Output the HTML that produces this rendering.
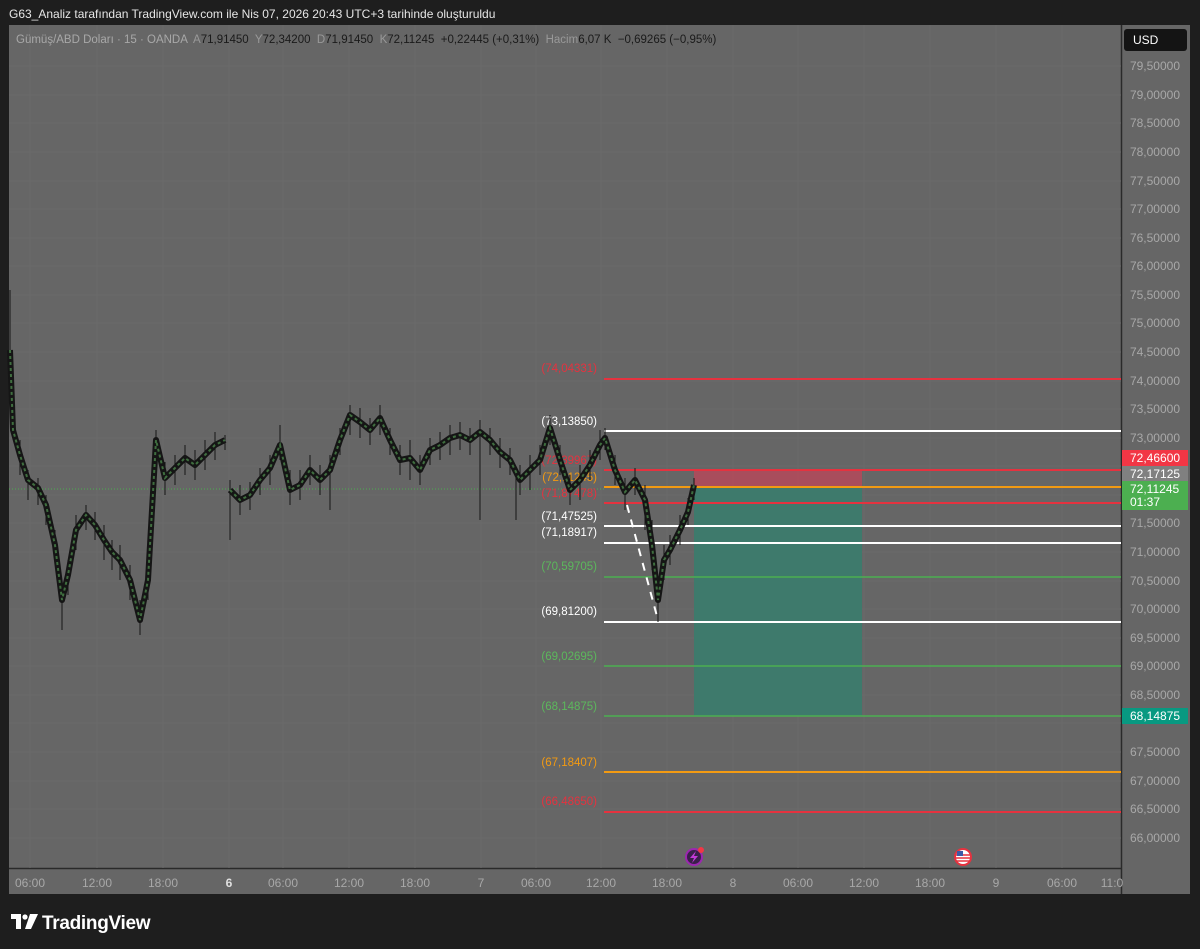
<!DOCTYPE html><html><head><meta charset="utf-8"><style>
body{margin:0;background:#1e1e1e;width:1200px;height:949px;overflow:hidden;font-family:"Liberation Sans",sans-serif}
svg{position:absolute;left:0;top:0}
</style></head><body>
<svg width="1200" height="949" viewBox="0 0 1200 949" font-family="Liberation Sans, sans-serif">
<rect width="1200" height="949" fill="#1e1e1e"/>
<text x="9" y="18" fill="#e6e6e6" font-size="12">G63_Analiz tarafından TradingView.com ile Nis 07, 2026 20:43 UTC+3 tarihinde oluşturuldu</text>
<rect x="9" y="25" width="1181" height="869" fill="#666666"/>
<line x1="1121.5" y1="25" x2="1121.5" y2="894" stroke="#2a2a2a" stroke-width="1.5"/>
<line x1="9" y1="868.5" x2="1121" y2="868.5" stroke="#2a2a2a" stroke-width="1.5"/>
<g stroke="#6a6a6a" stroke-width="1">
<path d="M30 25V868M97 25V868M163 25V868M229 25V868M283 25V868M349 25V868M415 25V868M481 25V868M536 25V868M601 25V868M667 25V868M733 25V868M798 25V868M864 25V868M930 25V868M996 25V868M1062 25V868"/>
<path d="M9 66H1121M9 95H1121M9 123H1121M9 152H1121M9 181H1121M9 209H1121M9 238H1121M9 266H1121M9 295H1121M9 323H1121M9 352H1121M9 381H1121M9 409H1121M9 438H1121M9 466H1121M9 495H1121M9 523H1121M9 552H1121M9 581H1121M9 609H1121M9 638H1121M9 666H1121M9 695H1121M9 723H1121M9 752H1121M9 781H1121M9 809H1121M9 838H1121"/>
</g>
<rect x="1124" y="29" width="63" height="22" rx="3" fill="#141414"/>
<text x="1133" y="44" fill="#fff" font-size="12">USD</text>
<text x="16" y="43" font-size="11.5" fill="#a8a8a8" xml:space="preserve">Gümüş/ABD Doları · 15 · OANDA  <tspan fill="#999">A</tspan><tspan fill="#1a1a1a">71,91450</tspan>  <tspan fill="#999">Y</tspan><tspan fill="#1a1a1a">72,34200</tspan>  <tspan fill="#999">D</tspan><tspan fill="#1a1a1a">71,91450</tspan>  <tspan fill="#999">K</tspan><tspan fill="#1a1a1a">72,11245  +0,22445 (+0,31%)</tspan>  <tspan fill="#999">Hacim</tspan><tspan fill="#1a1a1a">6,07 K  −0,69265 (−0,95%)</tspan></text>
<g fill="#a8a8a8" font-size="12" text-anchor="end">
<text x="1180" y="70">79,50000</text><text x="1180" y="99">79,00000</text><text x="1180" y="127">78,50000</text><text x="1180" y="156">78,00000</text><text x="1180" y="185">77,50000</text><text x="1180" y="213">77,00000</text><text x="1180" y="242">76,50000</text><text x="1180" y="270">76,00000</text><text x="1180" y="299">75,50000</text><text x="1180" y="327">75,00000</text><text x="1180" y="356">74,50000</text><text x="1180" y="385">74,00000</text><text x="1180" y="413">73,50000</text><text x="1180" y="442">73,00000</text><text x="1180" y="527">71,50000</text><text x="1180" y="556">71,00000</text><text x="1180" y="585">70,50000</text><text x="1180" y="613">70,00000</text><text x="1180" y="642">69,50000</text><text x="1180" y="670">69,00000</text><text x="1180" y="699">68,50000</text><text x="1180" y="756">67,50000</text><text x="1180" y="785">67,00000</text><text x="1180" y="813">66,50000</text><text x="1180" y="842">66,00000</text>
</g>
<rect x="694" y="470" width="168" height="17" fill="#b5495a" opacity="0.85"/>
<rect x="694" y="487" width="168" height="229" fill="#3e7a6c"/>
<g stroke-width="2">
<line x1="604" y1="379" x2="1121" y2="379" stroke="#e5323f"/>
<line x1="604" y1="431" x2="1121" y2="431" stroke="#ffffff"/>
<line x1="604" y1="470" x2="1121" y2="470" stroke="#e5323f"/>
<line x1="604" y1="487" x2="1121" y2="487" stroke="#f29a12"/>
<line x1="604" y1="503" x2="1121" y2="503" stroke="#e5323f"/>
<line x1="604" y1="526" x2="1121" y2="526" stroke="#ffffff"/>
<line x1="604" y1="543" x2="1121" y2="543" stroke="#ffffff"/>
<line x1="604" y1="577" x2="1121" y2="577" stroke="#4caf50" stroke-width="1.5"/>
<line x1="604" y1="622" x2="1121" y2="622" stroke="#ffffff"/>
<line x1="604" y1="666" x2="1121" y2="666" stroke="#4caf50" stroke-width="1.5"/>
<line x1="604" y1="716" x2="1121" y2="716" stroke="#4caf50" stroke-width="1.5"/>
<line x1="604" y1="772" x2="1121" y2="772" stroke="#f29a12"/>
<line x1="604" y1="812" x2="1121" y2="812" stroke="#e5323f"/>
</g>
<line x1="9" y1="489" x2="604" y2="489" stroke="#4caf50" stroke-width="1" stroke-dasharray="1,2"/>
<g font-size="11.5" text-anchor="end">
<text x="597" y="372" fill="#e5323f">(74,04331)</text>
<text x="597" y="425" fill="#fff">(73,13850)</text>
<text x="597" y="464" fill="#e5323f">(72,39967)</text>
<text x="597" y="481" fill="#f29a12">(72,11245)</text>
<text x="597" y="497" fill="#e5323f">(71,87478)</text>
<text x="597" y="520" fill="#fff">(71,47525)</text>
<text x="597" y="536" fill="#fff">(71,18917)</text>
<text x="597" y="570" fill="#5cb85c">(70,59705)</text>
<text x="597" y="615" fill="#fff">(69,81200)</text>
<text x="597" y="660" fill="#5cb85c">(69,02695)</text>
<text x="597" y="710" fill="#5cb85c">(68,14875)</text>
<text x="597" y="766" fill="#f29a12">(67,18407)</text>
<text x="597" y="805" fill="#e5323f">(66,48650)</text>
</g>
<!-- wicks -->
<path stroke="#151515" stroke-width="1" d="M10 290V360M20 440V475M28 470V500M38 478V505M46 495V525M55 530V565M62 585V630M68 560V595M76 515V550M86 505V530M95 512V540M104 525V560M112 540V570M120 545V580M130 565V600M140 600V635M148 560V600M156 430V470M165 462V495M175 455V485M185 445V475M195 450V480M205 440V470M215 432V460M225 435V450M230 480V540M240 485V515M250 482V510M260 468V495M270 455V485M280 425V460M290 470V505M300 470V500M310 455V485M320 465V495M330 455V510M340 428V455M350 405V435M360 408V438M370 418V445M380 405V435M390 428V455M400 445V475M410 440V480M420 455V485M430 438V465M440 432V460M450 425V455M460 422V450M470 428V455M480 420V520M490 428V455M500 438V468M510 448V475M516 470V520M520 465V495M530 455V490M540 445V475M550 415V445M560 445V475M570 475V505M580 465V500M590 450V480M600 430V460M605 428V450M615 455V485M625 478V510M635 468V495M645 485V530M652 520V570M658 580V622M664 545V580M670 535V565M680 515V545M688 498V525M694 478V500"/>
<polyline fill="none" stroke="#151515" stroke-width="6" stroke-linejoin="round" points="10,350 13,430 20,455 28,480 38,488 46,505 55,545 62,600 68,575 76,530 86,515 95,525 104,540 112,552 120,560 130,580 140,620 148,580 156,440 165,478 175,468 185,458 195,465 205,455 215,445 225,440"/>
<polyline fill="none" stroke="#151515" stroke-width="6" stroke-linejoin="round" points="230,490 240,500 250,495 260,480 270,468 280,445 290,490 300,485 310,470 320,480 330,470 340,440 350,415 360,422 370,430 380,418 390,440 400,460 410,458 420,470 430,450 440,445 450,438 460,435 470,440 480,432 490,440 500,452 510,460 520,480 530,470 540,460 550,428 560,460 570,490 580,480 590,465 600,445 605,438 615,470 625,492 635,480 645,500 652,545 658,600 664,560 670,550 680,530 688,512 694,485"/>
<polyline fill="none" stroke="#3f6e3f" stroke-width="2" stroke-dasharray="3,3" points="10,350 13,430 20,455 28,480 38,488 46,505 55,545 62,600 68,575 76,530 86,515 95,525 104,540 112,552 120,560 130,580 140,620 148,580 156,440 165,478 175,468 185,458 195,465 205,455 215,445 225,440"/>
<polyline fill="none" stroke="#3f6e3f" stroke-width="2" stroke-dasharray="3,3" points="230,490 240,500 250,495 260,480 270,468 280,445 290,490 300,485 310,470 320,480 330,470 340,440 350,415 360,422 370,430 380,418 390,440 400,460 410,458 420,470 430,450 440,445 450,438 460,435 470,440 480,432 490,440 500,452 510,460 520,480 530,470 540,460 550,428 560,460 570,490 580,480 590,465 600,445 605,438 615,470 625,492 635,480 645,500 652,545 658,600 664,560 670,550 680,530 688,512 694,485"/>
<line x1="627" y1="505" x2="658" y2="620" stroke="#fff" stroke-width="2" stroke-dasharray="8,7"/>
<rect x="1122" y="450" width="66" height="16" fill="#f23645"/><text x="1130" y="462" fill="#fff" font-size="12">72,46600</text>
<rect x="1122" y="466" width="66" height="15" fill="#808080"/><text x="1130" y="478" fill="#fff" font-size="12">72,17125</text>
<rect x="1122" y="481" width="66" height="29" fill="#4caf50"/><text x="1130" y="493" fill="#fff" font-size="12">72,11245</text><text x="1130" y="506" fill="#fff" font-size="12">01:37</text>
<rect x="1122" y="708" width="66" height="16" fill="#089981"/><text x="1130" y="720" fill="#fff" font-size="12">68,14875</text>
<g fill="#a8a8a8" font-size="12" text-anchor="middle">
<text x="30" y="887">06:00</text><text x="97" y="887">12:00</text><text x="163" y="887">18:00</text><text x="229" y="887" fill="#e0e0e0" font-weight="bold">6</text><text x="283" y="887">06:00</text><text x="349" y="887">12:00</text><text x="415" y="887">18:00</text><text x="481" y="887">7</text><text x="536" y="887">06:00</text><text x="601" y="887">12:00</text><text x="667" y="887">18:00</text><text x="733" y="887">8</text><text x="798" y="887">06:00</text><text x="864" y="887">12:00</text><text x="930" y="887">18:00</text><text x="996" y="887">9</text><text x="1062" y="887">06:00</text><text x="1112" y="887">11:0</text>
</g>
<circle cx="694" cy="857" r="8" fill="#3a1f4a" stroke="#9c27b0" stroke-width="2"/>
<path d="M696 851 L690 858 L694 858 L692 863 L698 856 L694 856Z" fill="#c13bd6"/>
<circle cx="701" cy="850" r="3" fill="#f23645"/>
<circle cx="963" cy="857" r="8" fill="#fff" stroke="#e5323f" stroke-width="2"/>
<path d="M956 855H970M956 858H970M956 861H970" stroke="#e5323f" stroke-width="1.5"/>
<rect x="957" y="851" width="6" height="5" fill="#3c5aa6"/>
<path d="M11 914h10v15h-5v-10h-5z" fill="#fff"/>
<circle cx="25" cy="917" r="2.6" fill="#fff"/>
<path d="M30 914h8l-7 15h-6z" fill="#fff"/>
<text x="42" y="929" fill="#fff" font-size="19" font-weight="bold" letter-spacing="-0.3">TradingView</text>
</svg>
</body></html>
